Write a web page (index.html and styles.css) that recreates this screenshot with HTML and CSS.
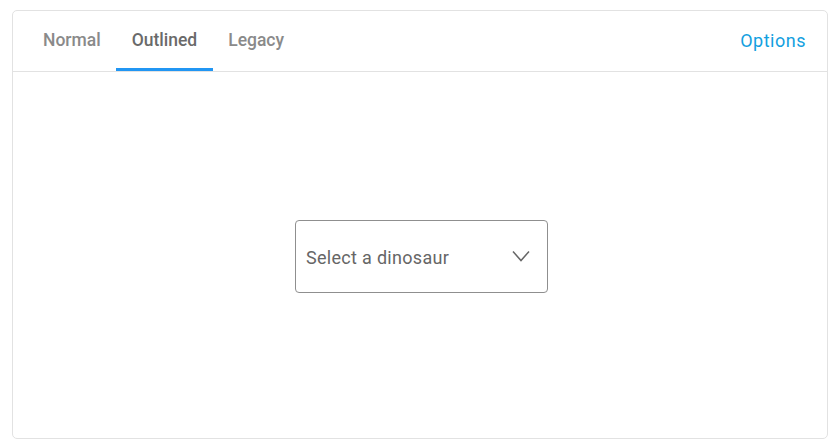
FILE: index.html
```html
<!DOCTYPE html>
<html>
<head>
<meta charset="utf-8">
<link rel="stylesheet" href="styles.css">
</head>
<body>
<div class="card">
  <div class="tabbar">
    <div class="tabs">
      <div class="tab">Normal</div>
      <div class="tab active">Outlined</div>
      <div class="tab">Legacy</div>
    </div>
    <div class="options">Options</div>
  </div>
  <div class="content">
    <div class="select">
      <span class="placeholder">Select a dinosaur</span>
      <svg class="chevron" width="18" height="12" viewBox="0 0 18 12"><path d="M1 1.5 L9 10.5 L17 1.5" fill="none" stroke="#666" stroke-width="1.5"/></svg>
    </div>
  </div>
</div>
</body>
</html>
```
FILE: styles.css
```css
html, body { margin: 0; padding: 0; background: #fff; }
body { font-family: Roboto, "Noto Sans", sans-serif; }
.card {
  margin: 10px 0 0 12px;
  width: 816px;
  height: 429px;
  box-sizing: border-box;
  border: 1px solid #e2e2e2;
  border-radius: 5px;
  display: flex;
  flex-direction: column;
}
.tabbar {
  height: 61px;
  box-sizing: border-box;
  border-bottom: 1px solid #e2e2e2;
  display: flex;
  align-items: stretch;
  justify-content: space-between;
  padding: 0 21px 0 14.5px;
}
.tabs { display: flex; }
.tab {
  padding: 0 15.5px;
  display: flex;
  align-items: center;
  font-size: 17.5px;
  font-weight: 500;
  color: #8a8a8a;
  border-bottom: 3px solid transparent;
  padding-top: 1px;
}
.tab.active { color: #6a6a6a; border-bottom-color: #2196f3; }
.options {
  display: flex;
  align-items: center;
  font-size: 18px;
  letter-spacing: 0.5px;
  font-weight: 400;
  color: #139fe0;
  padding-bottom: 2px;
}
.content {
  flex: 1;
  display: flex;
  align-items: center;
  justify-content: center;
  padding: 2px 0 0 3px;
}
.select {
  width: 253px;
  height: 73px;
  box-sizing: border-box;
  border: 1px solid #8f8f8f;
  border-radius: 4px;
  display: flex;
  align-items: center;
  justify-content: space-between;
  padding: 3px 17px 0 10px;
}
.placeholder { font-size: 18px; letter-spacing: 0.3px; color: #666; }
.chevron { display: block; margin-top: -4px; }
```
